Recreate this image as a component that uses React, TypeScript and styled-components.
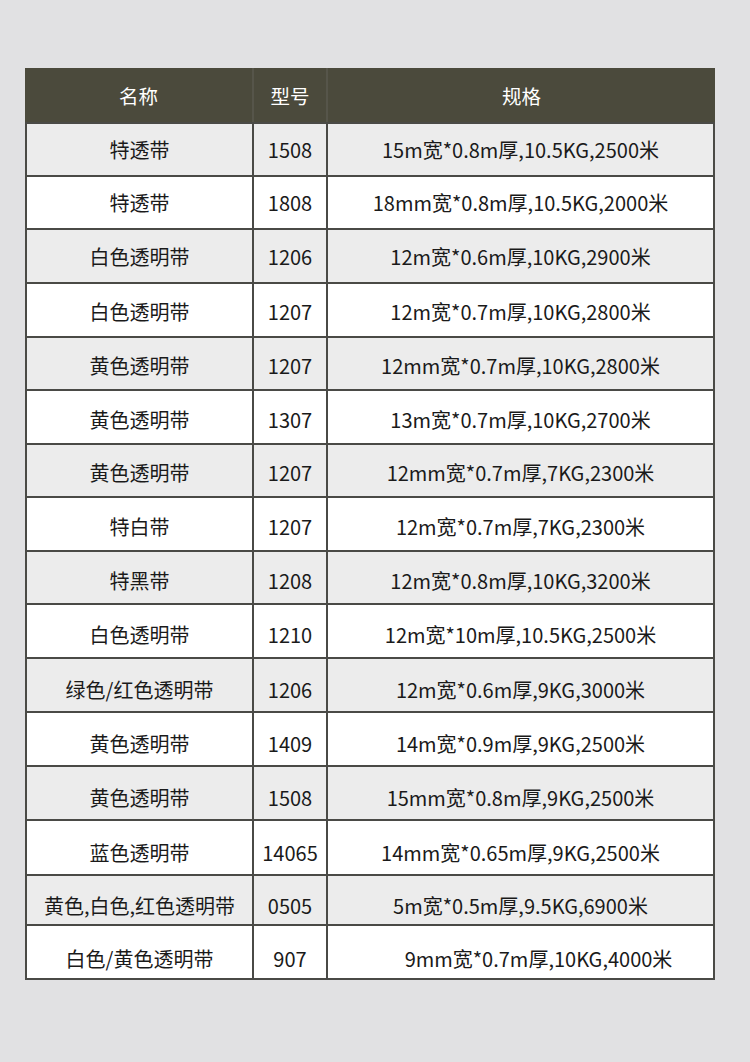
import React from 'react'
import styled, { createGlobalStyle } from 'styled-components'

const GlobalStyle = createGlobalStyle`
  body {
    margin: 0;
    background: #e1e1e3;
    font-family: 'Noto Sans CJK SC', 'Noto Sans', sans-serif;
    color: #1a1a1a;
  }
`

const Page = styled.div`
  width: 750px;
  height: 1062px;
  padding: 68px 0 0 25px;
  box-sizing: border-box;
`

const Table = styled.div`
  width: 690px;
  box-sizing: border-box;
  border: 2px solid #4a4a46;
  border-top: none;
  background: #fff;
`

const HeaderRow = styled.div`
  display: grid;
  grid-template-columns: 227px 74px 1fr;
  height: 54px;
  margin: 0 -2px;
  background: #4b4a3c;
  color: #fff;
`

const HeaderCell = styled.div<{ $divider?: boolean }>`
  display: flex;
  align-items: center;
  justify-content: center;
  font-size: 19.5px;
  box-sizing: border-box;
  border-left: ${(p) => (p.$divider ? '2px solid #56554a' : 'none')};
`

const Row = styled.div<{ $h: number; $shade: boolean }>`
  display: grid;
  grid-template-columns: 225px 74px 1fr;
  height: ${(p) => p.$h}px;
  box-sizing: border-box;
  border-top: 2px solid #4a4a46;
  background: ${(p) => (p.$shade ? '#ececec' : '#fff')};
`

const Cell = styled.div<{ $divider?: boolean; $drop: number; $shift?: number }>`
  display: flex;
  align-items: center;
  justify-content: center;
  box-sizing: border-box;
  font-size: 20px;
  white-space: nowrap;
  padding-top: ${(p) => p.$drop * 2}px;
  padding-left: ${(p) => (p.$shift ?? 0) * 2}px;
  border-left: ${(p) => (p.$divider ? '2px solid #4a4a46' : 'none')};
`

type Item = { name: string; model: string; spec: string; h: number; shift?: number }

const items: Item[] = [
  { name: '特透带', model: '1508', spec: '15m宽*0.8m厚,10.5KG,2500米', h: 53 },
  { name: '特透带', model: '1808', spec: '18mm宽*0.8m厚,10.5KG,2000米', h: 53 },
  { name: '白色透明带', model: '1206', spec: '12m宽*0.6m厚,10KG,2900米', h: 54 },
  { name: '白色透明带', model: '1207', spec: '12m宽*0.7m厚,10KG,2800米', h: 54 },
  { name: '黄色透明带', model: '1207', spec: '12mm宽*0.7m厚,10KG,2800米', h: 53 },
  { name: '黄色透明带', model: '1307', spec: '13m宽*0.7m厚,10KG,2700米', h: 54 },
  { name: '黄色透明带', model: '1207', spec: '12mm宽*0.7m厚,7KG,2300米', h: 53 },
  { name: '特白带', model: '1207', spec: '12m宽*0.7m厚,7KG,2300米', h: 54 },
  { name: '特黑带', model: '1208', spec: '12m宽*0.8m厚,10KG,3200米', h: 53 },
  { name: '白色透明带', model: '1210', spec: '12m宽*10m厚,10.5KG,2500米', h: 54 },
  { name: '绿色/红色透明带', model: '1206', spec: '12m宽*0.6m厚,9KG,3000米', h: 54 },
  { name: '黄色透明带', model: '1409', spec: '14m宽*0.9m厚,9KG,2500米', h: 54 },
  { name: '黄色透明带', model: '1508', spec: '15mm宽*0.8m厚,9KG,2500米', h: 54 },
  { name: '蓝色透明带', model: '14065', spec: '14mm宽*0.65m厚,9KG,2500米', h: 55 },
  { name: '黄色,白色,红色透明带', model: '0505', spec: '5m宽*0.5m厚,9.5KG,6900米', h: 50 },
  { name: '白色/黄色透明带', model: '907', spec: '9mm宽*0.7m厚,10KG,4000米', h: 54, shift: 18 },
]

const App: React.FC = () => {
  return (
    <Page>
      <GlobalStyle />
      <Table>
        <HeaderRow>
          <HeaderCell>名称</HeaderCell>
          <HeaderCell $divider>型号</HeaderCell>
          <HeaderCell $divider>规格</HeaderCell>
        </HeaderRow>
        {items.map((item, i) => {
          // text sits a little lower in each row going down the sheet
          const drop = Math.max(0, Math.round((i * 0.4 - 0.2) * 2) / 2)
          return (
            <Row key={i} $h={item.h} $shade={i % 2 === 0}>
              <Cell $drop={drop}>{item.name}</Cell>
              <Cell $divider $drop={drop}>{item.model}</Cell>
              <Cell $divider $drop={drop} $shift={item.shift}>{item.spec}</Cell>
            </Row>
          )
        })}
      </Table>
    </Page>
  )
}

export default App
